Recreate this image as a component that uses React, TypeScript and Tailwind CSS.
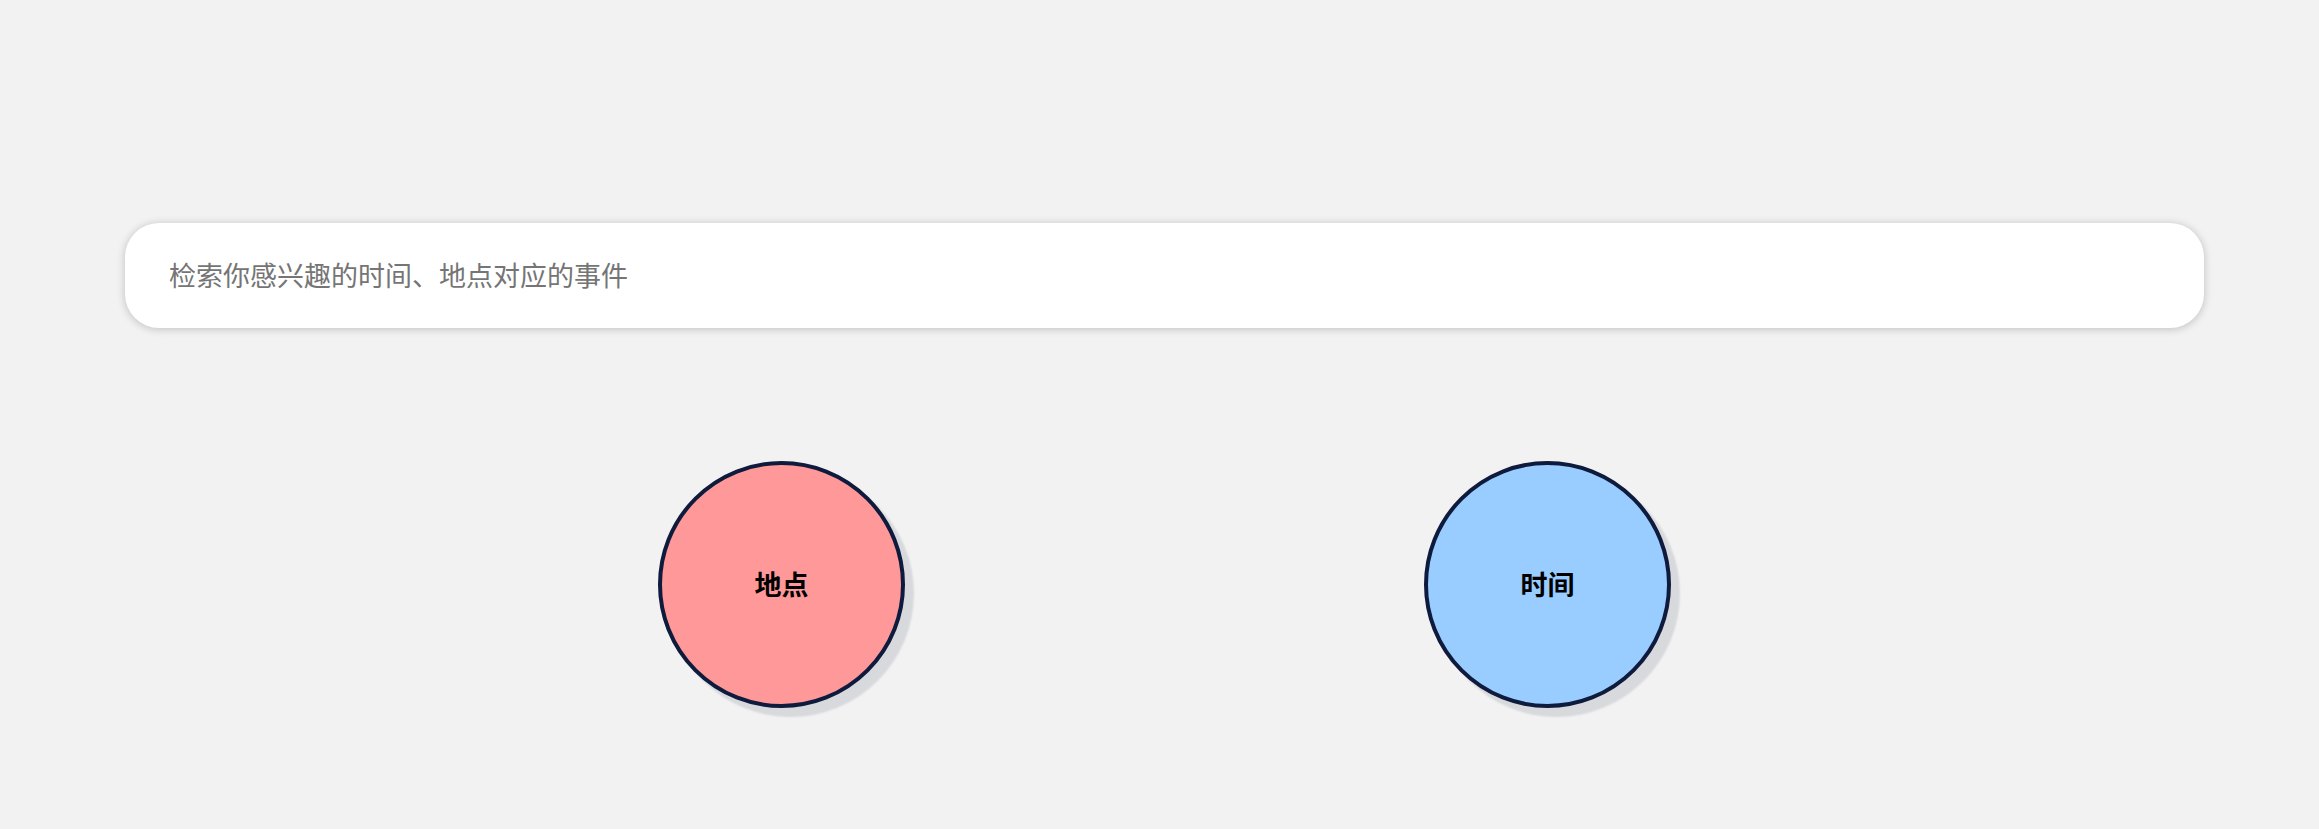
import React from "react";

export default function App() {
  return (
    <div
      className="min-h-[829px] w-full bg-[#f2f2f2] pt-[223px]"
      style={{ fontFamily: '"Noto Sans CJK SC", "Noto Sans", sans-serif' }}
    >
      <div className="ml-[125px] w-[2079px]">
        <div className="flex h-[105px] items-center rounded-[34px] bg-white pl-[44px] shadow-[0_1px_8px_rgba(0,0,0,0.22)]">
          <input
            className="w-full bg-transparent text-[27px] text-[#757575] outline-none placeholder:text-[#757575]"
            placeholder="检索你感兴趣的时间、地点对应的事件"
          />
        </div>
        <div className="mt-[133px] flex pl-[533px]">
          <div className="flex h-[247px] w-[247px] items-center justify-center rounded-full border-4 border-[#0f1b3d] bg-[#ff9999] shadow-[9px_9px_2px_#d8d9dd]">
            <span className="text-[27px] font-bold text-black">地点</span>
          </div>
          <div className="ml-[519px] flex h-[247px] w-[247px] items-center justify-center rounded-full border-4 border-[#0f1b3d] bg-[#99ccff] shadow-[9px_9px_2px_#d8d9dd]">
            <span className="text-[27px] font-bold text-black">时间</span>
          </div>
        </div>
      </div>
    </div>
  );
}
